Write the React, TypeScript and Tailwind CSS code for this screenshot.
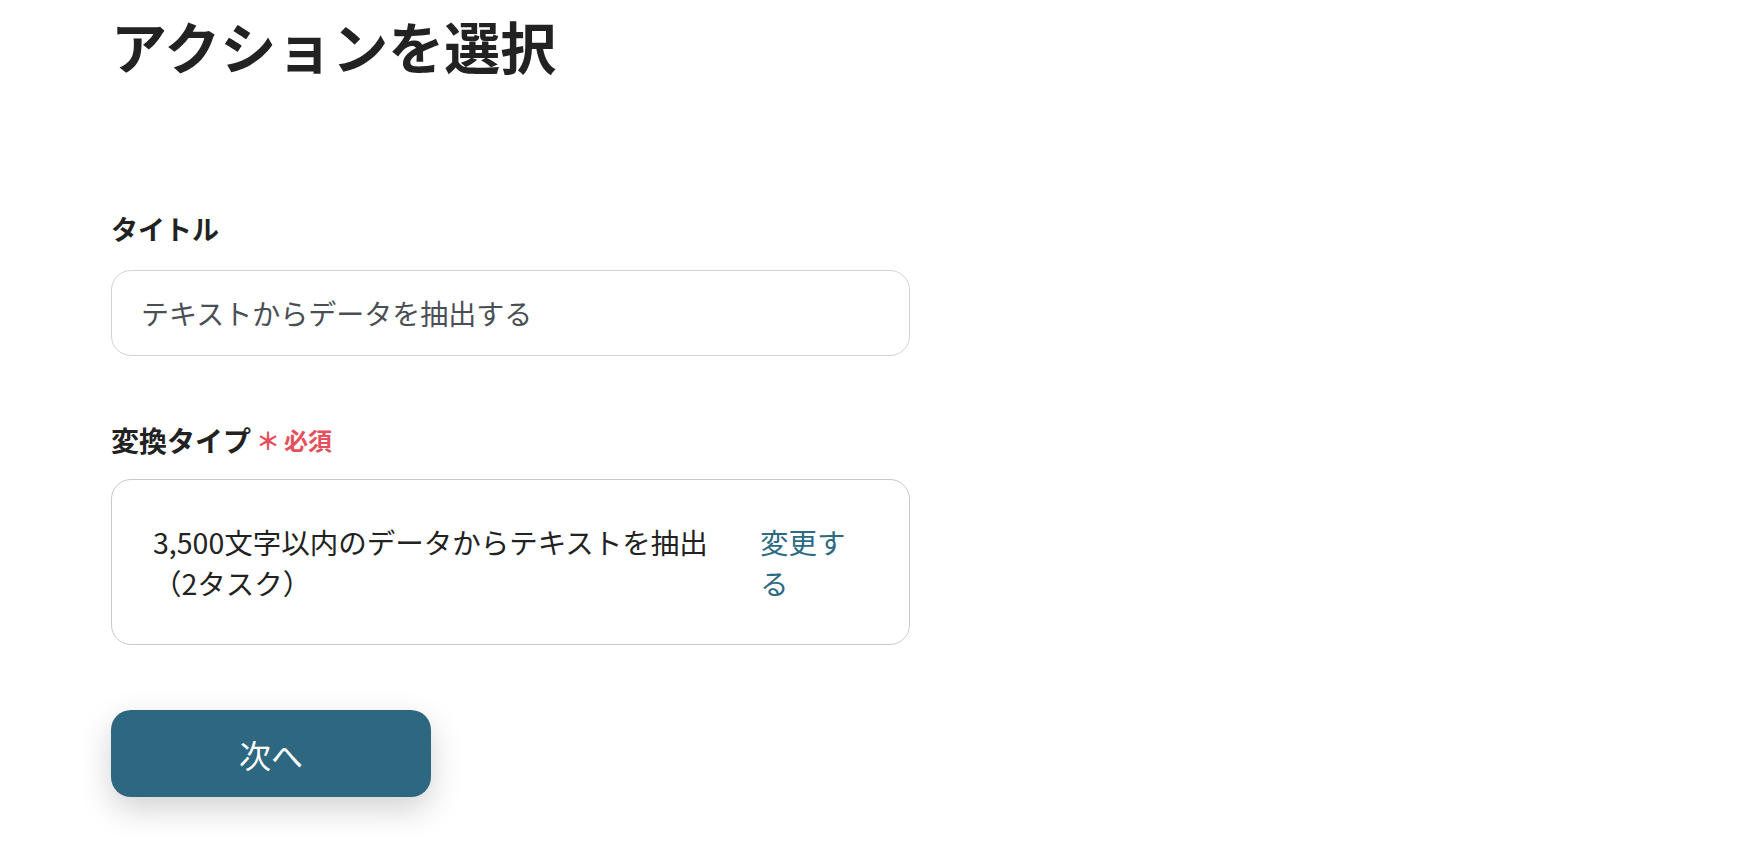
import React from "react";

const font = { fontFamily: '"Noto Sans CJK JP", "Noto Sans", sans-serif' };

export default function App() {
  return (
    <div
      className="min-h-screen bg-white pl-[111px] text-[#222]"
      style={font}
    >
      <div className="flex w-[799px] flex-col">
        {/* Page title */}
        <h1 className="mt-[5px] text-[56px] font-bold leading-[80px]">
          アクションを選択
        </h1>

        {/* タイトル */}
        <label className="mt-[126px] text-[27px] font-bold leading-[36px]">
          タイトル
        </label>
        <div className="mt-[23px] flex h-[86px] items-center rounded-[20px] border border-[#cfd3d8] pl-[29px] text-[28px] text-[#4a4f55]">
          テキストからデータを抽出する
        </div>

        {/* 変換タイプ */}
        <div className="mt-[66px] flex items-center leading-[36px]">
          <span className="text-[28px] font-bold">変換タイプ</span>
          <span className="ml-[5px] text-[24px] font-bold text-[#e5505c]">＊</span>
          <span className="ml-[4px] text-[24px] font-bold text-[#e5505c]">必須</span>
        </div>
        <div className="mt-[21px] flex gap-[40px] rounded-[20px] border border-[#c9c9c9] py-[41px] pl-[41px] pr-[53px] text-[28.5px] leading-[41px]">
          <p className="flex-1 text-[#222]">
            3,500文字以内のデータからテキストを抽出（2タスク）
          </p>
          <button className="w-[96px] shrink-0 text-left text-[#2d6a84]">
            変更する
          </button>
        </div>

        {/* Next button */}
        <button className="mt-[65px] h-[87px] w-[320px] rounded-[20px] bg-[#2e6780] text-[32px] text-white shadow-[0_12px_32px_rgba(0,0,0,0.18)]">
          次へ
        </button>
      </div>
    </div>
  );
}
